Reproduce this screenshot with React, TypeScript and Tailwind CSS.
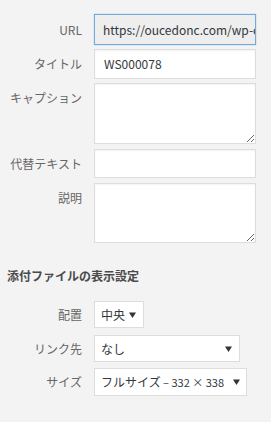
import React from "react";

const font = { fontFamily: '"Noto Sans CJK JP", "Noto Sans", sans-serif' };

function Arrow() {
  return (
    <svg width="7" height="6" viewBox="0 0 7 6" className="shrink-0">
      <polygon points="0,0.5 7,0.5 3.5,6" fill="#333" />
    </svg>
  );
}

function Label({ children, top }: { children: React.ReactNode; top?: boolean }) {
  return (
    <div
      className={`w-[75px] shrink-0 text-right text-[12px] text-[#666] leading-[16px] ${
        top ? "pt-[7px]" : "self-center"
      }`}
    >
      {children}
    </div>
  );
}

export default function App() {
  return (
    <div className="w-[271px] h-[422px] bg-[#f3f3f3] overflow-hidden" style={font}>
      <div className="pl-[7px] pt-[14px]">
        {/* URL */}
        <div className="flex gap-[12px] h-[31px]">
          <Label>URL</Label>
          <div className="w-[162px] h-full border border-[#74a8de] shadow-[0_0_1px_rgba(30,140,190,0.6)] bg-[#eeeeee] flex items-center pl-[8px] overflow-hidden whitespace-nowrap text-[12px] text-[#32373c]">
            https://oucedonc.com/wp-c
          </div>
        </div>
        {/* Title */}
        <div className="flex gap-[12px] h-[30px] mt-[4px]">
          <Label>タイトル</Label>
          <div className="w-[162px] h-full border border-[#dddddd] shadow-[inset_0_1px_2px_rgba(0,0,0,0.05)] bg-white flex items-center pl-[9px] text-[12px] text-[#32373c]">
            WS000078
          </div>
        </div>
        {/* Caption */}
        <div className="flex gap-[12px] h-[61px] mt-[4px]">
          <Label top>キャプション</Label>
          <textarea className="w-[162px] h-full border border-[#dddddd] shadow-[inset_0_1px_2px_rgba(0,0,0,0.05)] bg-white outline-none" />
        </div>
        {/* Alt */}
        <div className="flex gap-[12px] h-[29px] mt-[5px]">
          <Label>代替テキスト</Label>
          <div className="w-[162px] h-full border border-[#dddddd] shadow-[inset_0_1px_2px_rgba(0,0,0,0.05)] bg-white" />
        </div>
        {/* Description */}
        <div className="flex gap-[12px] h-[60px] mt-[5px]">
          <Label top>説明</Label>
          <textarea className="w-[162px] h-full border border-[#dddddd] shadow-[inset_0_1px_2px_rgba(0,0,0,0.05)] bg-white outline-none" />
        </div>

        {/* Heading */}
        <div className="mt-[25px] text-[12px] leading-[16px] font-semibold text-[#4a4a4a]">
          添付ファイルの表示設定
        </div>

        {/* Align */}
        <div className="flex gap-[12px] h-[27px] mt-[17px]">
          <Label>配置</Label>
          <div className="w-[50px] h-full border border-[#dddddd] bg-white flex items-center justify-between pl-[6px] pr-[7px] text-[12px] text-[#32373c]">
            <span>中央</span>
            <Arrow />
          </div>
        </div>
        {/* Link */}
        <div className="flex gap-[12px] h-[27px] mt-[7px]">
          <Label>リンク先</Label>
          <div className="w-[146px] h-full border border-[#dddddd] bg-white flex items-center justify-between pl-[6px] pr-[7px] text-[12px] text-[#32373c]">
            <span>なし</span>
            <Arrow />
          </div>
        </div>
        {/* Size */}
        <div className="flex gap-[12px] h-[28px] mt-[6px]">
          <Label>サイズ</Label>
          <div className="w-[153px] h-full border border-[#dddddd] bg-white flex items-center justify-between pl-[6px] pr-[6px] text-[12px] text-[#32373c] whitespace-nowrap">
            <span>
              フルサイズ<span className="text-[11px]"> – 332 × 338</span>
            </span>
            <Arrow />
          </div>
        </div>
      </div>
    </div>
  );
}
